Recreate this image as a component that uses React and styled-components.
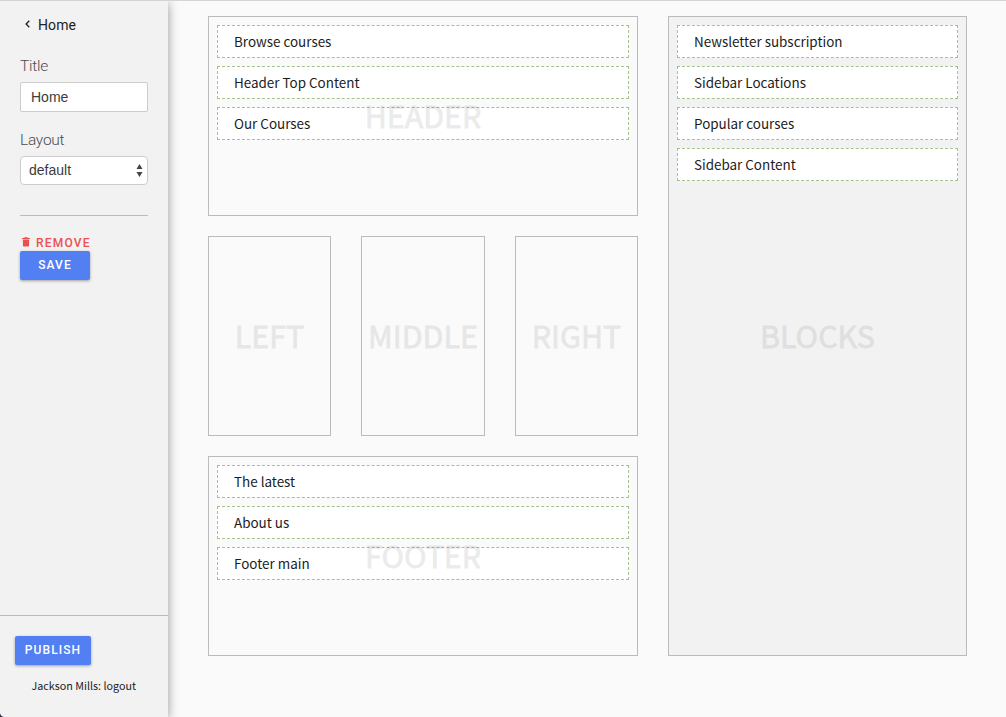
import React from "react";
import styled, { createGlobalStyle } from "styled-components";

const sourceSans = `"Noto Sans CJK SC", "Open Sans", sans-serif`;

const GlobalStyle = createGlobalStyle`
  *, *::before, *::after { box-sizing: border-box; }
  body { margin: 0; background: #fafafa; font-family: ${sourceSans}; color: #1c1c1c; }
`;

const Page = styled.div`
  display: flex;
  height: 717px;
  width: 1006px;
  overflow: hidden;
  border-top: 1px solid #d4d4d4;
`;

const Sidebar = styled.aside`
  position: relative;
  display: flex;
  flex-direction: column;
  justify-content: space-between;
  flex: 0 0 168px;
  background: #f2f2f2;
  box-shadow: 0 2px 10px rgba(0, 0, 0, 0.4);
`;

const Settings = styled.div`
  display: flex;
  flex-direction: column;
  padding: 14px 20px 0;
`;

const BackLink = styled.a`
  display: flex;
  align-items: center;
  height: 20px;
  padding-left: 5px;
  color: #222;
  font: 400 14px/20px Roboto, sans-serif;
  letter-spacing: 0.1px;

  svg { margin: -3px 8px 0 0; }
`;

const Label = styled.label`
  height: 20px;
  margin-top: ${(p) => p.$gap}px;
  color: #4c4c4c;
  font: 300 15.5px/20px Roboto, sans-serif;
  letter-spacing: -0.25px;
`;

const Field = styled.div`
  display: flex;
  align-items: center;
  justify-content: space-between;
  height: ${(p) => (p.$select ? 29 : 30)}px;
  margin-top: 6px;
  padding: ${(p) => (p.$select ? "0 4px 1px 8px" : "0 10px")};
  border: 1px solid #ccc;
  border-radius: ${(p) => (p.$select ? 4 : 2)}px;
  background: #fff;
  color: #3c3c3c;
  font: 400 14px/20px "Liberation Sans", sans-serif;

  svg { margin-top: 1px; }
`;

const Divider = styled.div`
  height: 1px;
  margin: 30px 0 19px;
  background: #bbb;
`;

const RemoveButton = styled.a`
  display: flex;
  align-items: center;
  height: 16px;
  padding-left: 2px;
  color: #eb5050;
  font: 500 12px/16px Roboto, sans-serif;
  letter-spacing: 1.2px;

  svg { margin: -2px 6px 0 0; }
`;

const Button = styled.a`
  display: flex;
  align-items: center;
  justify-content: center;
  width: ${(p) => p.$width}px;
  height: 29px;
  border-radius: 2px;
  background: #527ff2;
  box-shadow: 0 1px 3px rgba(0, 0, 0, 0.35);
  color: #fff;
  font: 500 12px/29px Roboto, sans-serif;
  letter-spacing: 1.1px;
`;

const Account = styled.div`
  display: flex;
  flex-direction: column;
  height: 102px;
  padding: 20px 15px 0;
  border-top: 1px solid #bbb;
`;

const Session = styled.div`
  margin: 13px 0 0 16.5px;
  font-size: 10.75px;
  line-height: 16px;
  white-space: nowrap;
`;

const Corner = styled.svg`
  position: absolute;
  left: 0;
  bottom: 0;
`;

const Canvas = styled.main`
  display: grid;
  grid-template-columns: 430px 299px;
  column-gap: 30px;
  padding: 15px 0 0 40px;
  height: 655px;
`;

const Layout = styled.div`
  display: grid;
  grid-template-rows: repeat(3, 200px);
  row-gap: 20px;
`;

const Columns = styled.div`
  display: grid;
  grid-template-columns: 123px 124px 123px;
  column-gap: 30px;
`;

const Region = styled.section`
  position: relative;
  display: flex;
  flex-direction: column;
  gap: 8px;
  padding: 8px;
  border: 1px solid #bbb;
  background: ${(p) => (p.$filled ? "#f2f2f2" : "transparent")};
`;

const RegionName = styled.span`
  position: absolute;
  inset: 0;
  display: flex;
  align-items: center;
  justify-content: center;
  padding-bottom: 3px;
  color: #000;
  font-size: 30.4px;
  line-height: 40px;
  opacity: 0.075;
  pointer-events: none;
  -webkit-text-stroke: 0.8px #000;
`;

const Block = styled.div`
  height: 33px;
  padding: 0 16px;
  border: 1px dashed #a4c38c;
  background: #fff;
  font-size: 13.43px;
  line-height: 30px;
  white-space: nowrap;
`;

function DropRegion({ name, blocks = [], filled }) {
  return (
    <Region $filled={filled}>
      {blocks.map((b) => (
        <Block key={b}>{b}</Block>
      ))}
      <RegionName>{name}</RegionName>
    </Region>
  );
}

export default function App() {
  return (
    <>
      <GlobalStyle />
      <Page>
        <Sidebar>
          <Settings>
            <BackLink>
              <svg width="5" height="8" viewBox="0 0 5 8" fill="none" stroke="#222" strokeWidth="1.3">
                <path d="M4.3 .8 1.1 4l3.2 3.2" />
              </svg>
              Home
            </BackLink>
            <Label $gap={21}>Title</Label>
            <Field>Home</Field>
            <Label $gap={18}>Layout</Label>
            <Field $select>
              default
              <svg width="7" height="13" viewBox="0 0 7 13" fill="#444">
                <path d="M3.5 0 6.5 5h-6zM3.5 13l3-5h-6z" />
              </svg>
            </Field>
            <Divider />
            <RemoveButton>
              <svg width="8" height="10" viewBox="0 0 8 10" fill="#eb5050">
                <path d="M2.6 .3h2.8l.5.6H8v1H0v-1h2.1zM.9 2.5h6.2v6q0 1-1 1H1.9q-1 0-1-1z" />
              </svg>
              REMOVE
            </RemoveButton>
            <Button $width={70}>SAVE</Button>
          </Settings>
          <Account>
            <Button $width={76}>PUBLISH</Button>
            <Session>Jackson Mills: logout</Session>
          </Account>
          <Corner width="4" height="4" viewBox="0 0 4 4" fill="#26323e">
            <path d="M0 0Q.5 3.5 4 4H0z" />
          </Corner>
        </Sidebar>
        <Canvas>
          <Layout>
            <DropRegion name="HEADER" blocks={["Browse courses", "Header Top Content", "Our Courses"]} />
            <Columns>
              <DropRegion name="LEFT" />
              <DropRegion name="MIDDLE" />
              <DropRegion name="RIGHT" />
            </Columns>
            <DropRegion name="FOOTER" blocks={["The latest", "About us", "Footer main"]} />
          </Layout>
          <DropRegion
            filled
            name="BLOCKS"
            blocks={["Newsletter subscription", "Sidebar Locations", "Popular courses", "Sidebar Content"]}
          />
        </Canvas>
      </Page>
    </>
  );
}
